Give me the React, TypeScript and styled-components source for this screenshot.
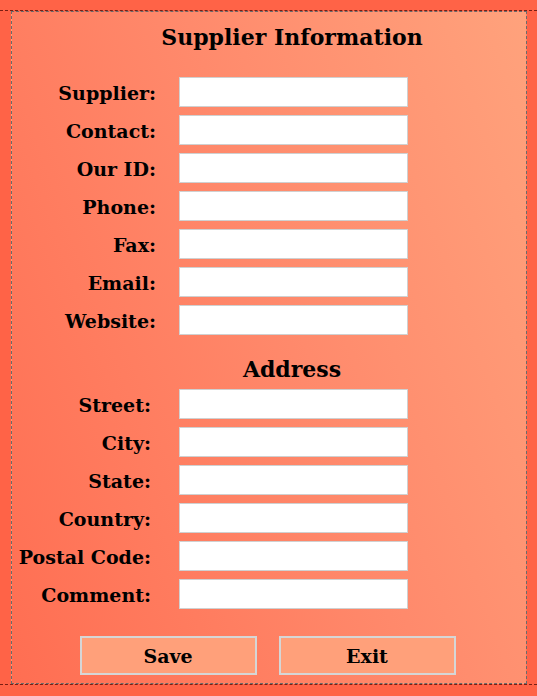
import React from "react";
import styled, { createGlobalStyle } from "styled-components";

const Global = createGlobalStyle`
  html, body { margin: 0; padding: 0; }
  body {
    background: #ff6347;
    font-family: "DejaVu Serif", "Liberation Serif", serif;
    color: #000;
  }
`;

const Wrapper = styled.div`
  margin-top: 10px;
  border-top: 1px dashed #7a1e12;
  border-bottom: 1px dashed #7a1e12;
`;

const Panel = styled.form`
  margin: 0 10px 0 11px;
  border: 1px dashed #6b6b6b;
  background: linear-gradient(70deg, #ff6e52 0%, #ff8a6c 55%, #ffa27c 100%);
  padding: 12px 0 8px 0;
  display: flex;
  flex-direction: column;
`;

const Heading = styled.h2<{ $top: number; $bottom: number }>`
  margin: ${(p) => p.$top}px 0 ${(p) => p.$bottom}px 0;
  padding-left: 46px;
  height: 26px;
  line-height: 26px;
  font-size: 22px;
  font-weight: bold;
  text-align: center;
`;

const Grid = styled.div`
  display: grid;
  grid-template-columns: 167px 229px;
  row-gap: 8px;
`;

const Label = styled.label<{ $pad: number }>`
  display: flex;
  align-items: center;
  justify-content: flex-end;
  padding-right: ${(p) => p.$pad}px;
  padding-top: 2px;
  font-size: 19px;
  font-weight: bold;
  white-space: nowrap;
`;

const Input = styled.input`
  box-sizing: border-box;
  width: 229px;
  height: 30px;
  margin: 0;
  border: 1px solid #d0d0d0;
  background: #fff;
  padding: 0 4px;
  font: inherit;
`;

const ButtonRow = styled.div`
  display: flex;
  justify-content: center;
  gap: 22px;
  margin-top: 27px;
  padding-right: 3px;
`;

const Button = styled.button`
  box-sizing: border-box;
  width: 177px;
  height: 39px;
  border: 2px solid #d6d6d6;
  background: #ffa07a;
  font-family: "DejaVu Serif", "Liberation Serif", serif;
  font-size: 19px;
  font-weight: bold;
  color: #000;
  cursor: pointer;
`;

const supplierFields = ["Supplier", "Contact", "Our ID", "Phone", "Fax", "Email", "Website"];
const addressFields = ["Street", "City", "State", "Country", "Postal Code", "Comment"];

function FieldGrid({ fields, pad }: { fields: string[]; pad: number }) {
  return (
    <Grid>
      {fields.map((f) => (
        <React.Fragment key={f}>
          <Label $pad={pad}>{f}:</Label>
          <Input type="text" />
        </React.Fragment>
      ))}
    </Grid>
  );
}

export default function App() {
  return (
    <>
      <Global />
      <Wrapper>
        <Panel onSubmit={(e) => e.preventDefault()}>
          <Heading $top={0} $bottom={27}>Supplier Information</Heading>
          <FieldGrid fields={supplierFields} pad={23} />
          <Heading $top={21} $bottom={7}>Address</Heading>
          <FieldGrid fields={addressFields} pad={28} />
          <ButtonRow>
            <Button type="submit">Save</Button>
            <Button type="button">Exit</Button>
          </ButtonRow>
        </Panel>
      </Wrapper>
    </>
  );
}
